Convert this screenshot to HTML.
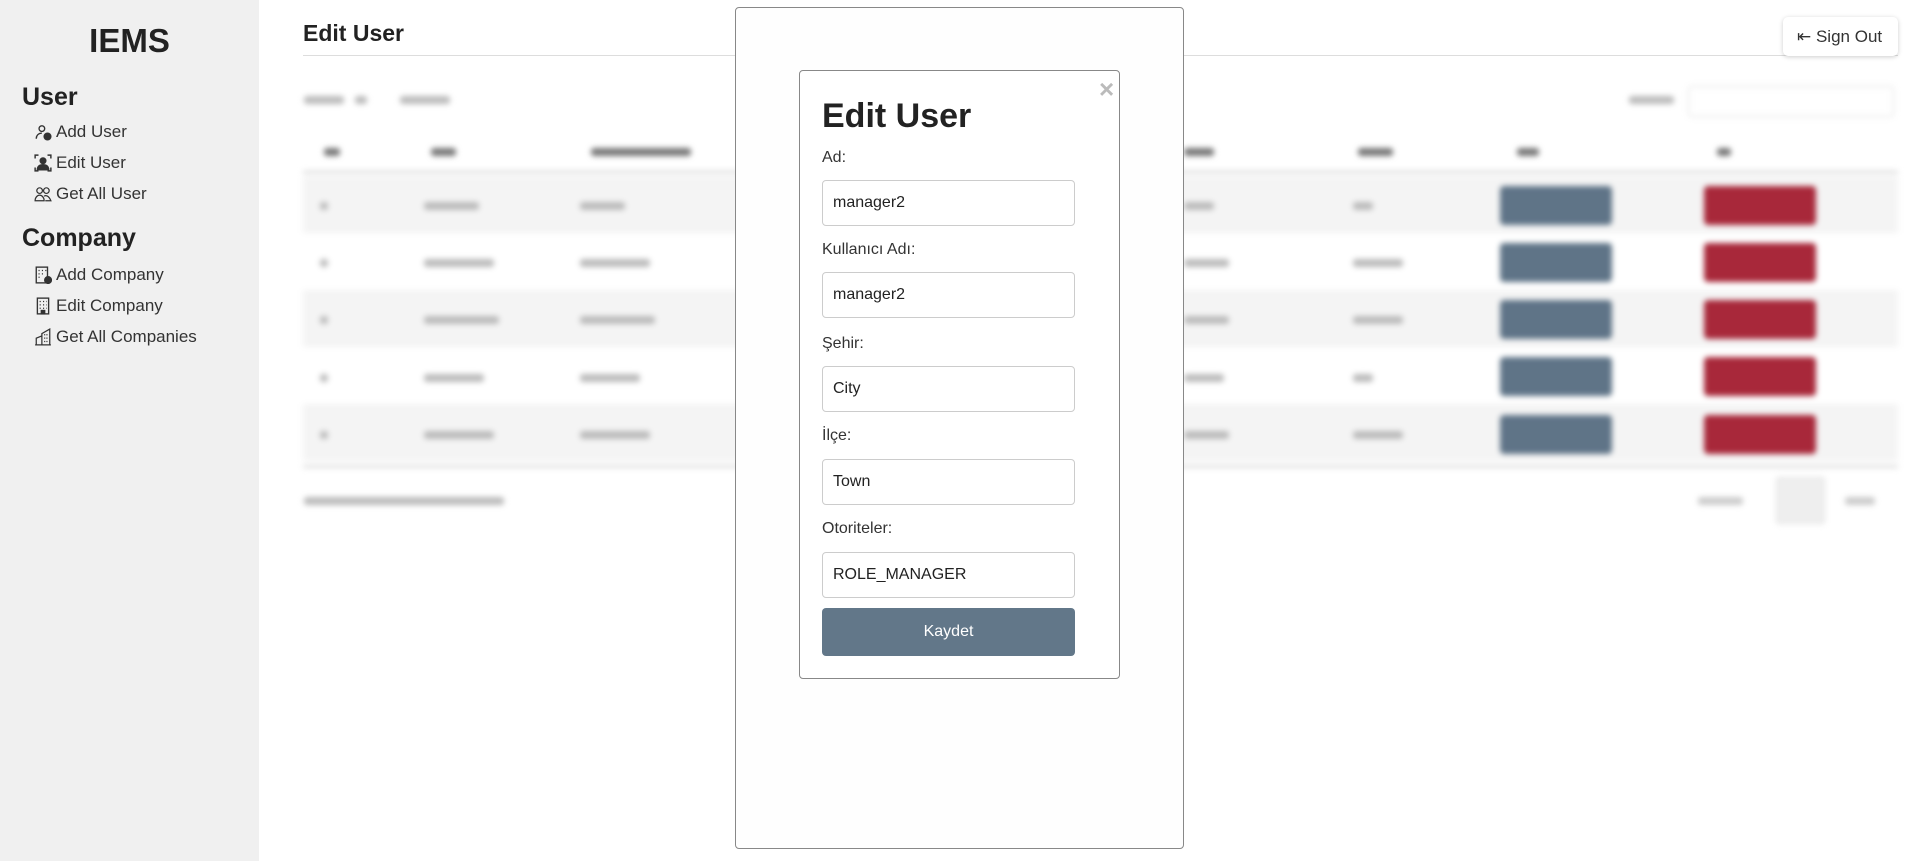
<!DOCTYPE html>
<html><head><meta charset="utf-8"><style>
*{box-sizing:border-box;margin:0;padding:0}
body{width:1918px;height:861px;overflow:hidden;background:#fff;font-family:"Liberation Sans",sans-serif;color:#212529;position:relative}
.a{position:absolute;white-space:nowrap}
#side{position:absolute;left:0;top:0;width:259px;height:861px;background:#f0f0f0}
.it{position:absolute;left:34px;font-size:17px;color:#333;display:flex;align-items:center;gap:4px}
.it svg{width:18px;height:18px}
#bg{position:absolute;left:0;top:0;width:1918px;height:861px;filter:blur(3px)}
.row{position:absolute;left:303px;width:1595px;height:57px}
.eb{position:absolute;left:1500px;width:112px;height:39px;background:#5f7487;border-radius:4px}
.db{position:absolute;left:1704px;width:112px;height:39px;background:#a8283a;border-radius:4px}
.bt{position:absolute;height:8px;background:#bbb;border-radius:3px}
label{position:absolute;left:822px;font-size:16px;color:#333}
.in{position:absolute;left:822px;width:253px;height:46px;border:1px solid #ccc;border-radius:4px;background:#fff;font-size:16px;padding:13px 10px;color:#222}
</style></head><body>
<div id="side">
<div class="a" style="left:0;width:259px;text-align:center;top:22px;font-size:33px;font-weight:bold;color:#222">IEMS</div>
<div class="a" style="left:22px;top:83px;font-size:25px;font-weight:bold;color:#222">User</div>
<div class="it" style="top:122px"><svg viewBox="0 0 16 16" fill="none" stroke="#333" stroke-width="1.2"><circle cx="7" cy="5" r="2.5"/><path d="M2 14c0-3 2-5 5-5"/><circle cx="12" cy="12" r="3" fill="#333"/></svg>Add User</div>
<div class="it" style="top:153px"><svg viewBox="0 0 16 16" fill="none" stroke="#333" stroke-width="1.3"><path d="M1 4V1h3M12 1h3v3M1 12v3h3M12 15h3v-3"/><circle cx="8" cy="6" r="2.5" fill="#333"/><path d="M3 14c0-3 2-4.5 5-4.5s5 1.5 5 4.5z" fill="#333"/></svg>Edit User</div>
<div class="it" style="top:184px"><svg viewBox="0 0 16 16" fill="none" stroke="#333" stroke-width="1.1"><circle cx="5" cy="5" r="2.5"/><circle cx="11" cy="5" r="2.5"/><path d="M1 14c0-3 2-5 4-5s4 2 4 5zM9 10c1-1 4-1 6 4h-5"/></svg>Get All User</div>
<div class="a" style="left:22px;top:224px;font-size:25px;font-weight:bold;color:#222">Company</div>
<div class="it" style="top:265px"><svg viewBox="0 0 16 16" fill="none" stroke="#333" stroke-width="1.2"><rect x="2" y="1" width="10" height="14"/><path d="M4 4h1M7 4h1M10 4h1M4 7h1M7 7h1M4 10h1" /><circle cx="12.5" cy="12.5" r="3" fill="#333"/></svg>Add Company</div>
<div class="it" style="top:296px"><svg viewBox="0 0 16 16" fill="none" stroke="#333" stroke-width="1.2"><rect x="3" y="1" width="10" height="14"/><path d="M5 4h1M8 4h1M11 4h.5M5 7h1M8 7h1M11 7h.5M5 10h1M8 10h1M11 10h.5"/><rect x="6.5" y="12" width="3" height="3" fill="#333"/></svg>Edit Company</div>
<div class="it" style="top:327px"><svg viewBox="0 0 16 16" fill="none" stroke="#333" stroke-width="1.1"><path d="M1 15h14M2 15V9l5-2v8M7 15V5l7-4v14M9 6h1M11 6h1M9 9h1M11 9h1M9 12h1M11 12h1"/></svg>Get All Companies</div>
</div>
<div class="a" style="left:303px;top:20px;font-size:23px;font-weight:bold;color:#222">Edit User</div>
<div class="a" style="left:303px;top:55px;width:1595px;height:1px;background:#ddd"></div>
<div class="a" style="left:1783px;top:17px;width:115px;height:39px;background:#fff;border-radius:5px;box-shadow:0 1px 5px rgba(0,0,0,.2);font-size:17px;color:#333;padding:10px 0 0 14px">⇤ Sign Out</div>
<div id="bg">
<div class="bt" style="left:304px;top:96px;width:40px"></div><div class="bt" style="left:355px;top:96px;width:12px"></div><div class="bt" style="left:400px;top:96px;width:50px"></div>
<div class="bt" style="left:1629px;top:96px;width:45px"></div>
<div class="a" style="left:1688px;top:86px;width:206px;height:31px;border:1px solid #ddd;border-radius:4px"></div>
<div class="bt" style="left:324px;top:148px;width:16px;background:#777"></div><div class="bt" style="left:431px;top:148px;width:25px;background:#777"></div><div class="bt" style="left:591px;top:148px;width:100px;background:#777"></div>
<div class="bt" style="left:1184px;top:148px;width:30px;background:#777"></div><div class="bt" style="left:1358px;top:148px;width:35px;background:#777"></div><div class="bt" style="left:1517px;top:148px;width:22px;background:#777"></div><div class="bt" style="left:1717px;top:148px;width:14px;background:#777"></div>
<div class="a" style="left:303px;top:171px;width:1595px;height:2px;background:#ccc"></div>
<div class="row" style="top:176px;background:#f4f4f4"></div>
<div class="row" style="top:233px;background:#fff"></div>
<div class="row" style="top:290px;background:#f4f4f4"></div>
<div class="row" style="top:347px;background:#fff"></div>
<div class="row" style="top:404px;background:#f4f4f4"></div>
<div class="a" style="left:303px;top:465px;width:1595px;height:3px;background:#ddd"></div>
<div class="eb" style="top:186px"></div><div class="db" style="top:186px"></div>
<div class="eb" style="top:243px"></div><div class="db" style="top:243px"></div>
<div class="eb" style="top:300px"></div><div class="db" style="top:300px"></div>
<div class="eb" style="top:357px"></div><div class="db" style="top:357px"></div>
<div class="eb" style="top:415px"></div><div class="db" style="top:415px"></div>
<div class="bt" style="left:320px;top:202px;width:8px"></div><div class="bt" style="left:424px;top:202px;width:55px"></div><div class="bt" style="left:580px;top:202px;width:45px"></div>
<div class="bt" style="left:320px;top:259px;width:8px"></div><div class="bt" style="left:424px;top:259px;width:70px"></div><div class="bt" style="left:580px;top:259px;width:70px"></div>
<div class="bt" style="left:320px;top:316px;width:8px"></div><div class="bt" style="left:424px;top:316px;width:75px"></div><div class="bt" style="left:580px;top:316px;width:75px"></div>
<div class="bt" style="left:320px;top:374px;width:8px"></div><div class="bt" style="left:424px;top:374px;width:60px"></div><div class="bt" style="left:580px;top:374px;width:60px"></div>
<div class="bt" style="left:320px;top:431px;width:8px"></div><div class="bt" style="left:424px;top:431px;width:70px"></div><div class="bt" style="left:580px;top:431px;width:70px"></div>
<div class="bt" style="left:1184px;top:202px;width:30px"></div><div class="bt" style="left:1353px;top:202px;width:20px"></div>
<div class="bt" style="left:1184px;top:259px;width:45px"></div><div class="bt" style="left:1353px;top:259px;width:50px"></div>
<div class="bt" style="left:1184px;top:316px;width:45px"></div><div class="bt" style="left:1353px;top:316px;width:50px"></div>
<div class="bt" style="left:1184px;top:374px;width:40px"></div><div class="bt" style="left:1353px;top:374px;width:20px"></div>
<div class="bt" style="left:1184px;top:431px;width:45px"></div><div class="bt" style="left:1353px;top:431px;width:50px"></div>
<div class="bt" style="left:304px;top:497px;width:200px"></div>
<div class="bt" style="left:1698px;top:497px;width:45px;background:#ccc"></div>
<div class="a" style="left:1776px;top:477px;width:49px;height:47px;background:#eee;border:1px solid #ddd;border-radius:3px"></div>
<div class="bt" style="left:1845px;top:497px;width:30px;background:#ccc"></div>
</div>
<div class="a" style="left:735px;top:7px;width:449px;height:842px;background:#fefefe;border:1px solid #888;border-radius:4px"></div>
<div class="a" style="left:799px;top:70px;width:321px;height:609px;background:#fff;border:1px solid #888;border-radius:4px"></div>
<div class="a" style="left:1099px;top:74px;font-size:26px;color:#bbb;font-weight:bold">×</div>
<div class="a" style="left:822px;top:97px;font-size:34px;font-weight:bold;color:#222">Edit User</div>
<label style="top:149px">Ad:</label>
<div class="in" style="top:180px">manager2</div>
<label style="top:241px">Kullanıcı Adı:</label>
<div class="in" style="top:272px">manager2</div>
<label style="top:335px">Şehir:</label>
<div class="in" style="top:366px">City</div>
<label style="top:427px">İlçe:</label>
<div class="in" style="top:459px">Town</div>
<label style="top:520px">Otoriteler:</label>
<div class="in" style="top:552px">ROLE_MANAGER</div>
<div class="a" style="left:822px;top:608px;width:253px;height:48px;background:#627789;border-radius:4px;color:#fff;font-size:16px;text-align:center;line-height:48px">Kaydet</div>
</body></html>
